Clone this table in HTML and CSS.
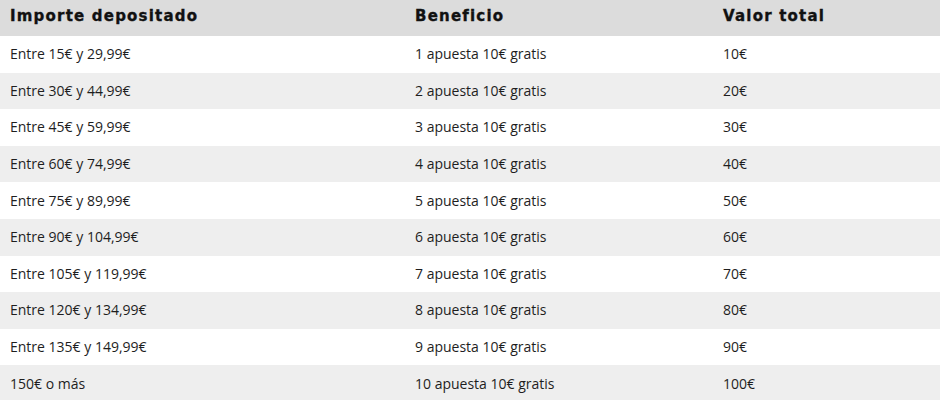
FILE: index.html
```html
<!DOCTYPE html>
<html lang="es">
<head>
<meta charset="utf-8">
<link rel="stylesheet" href="styles.css">
</head>
<body>
<table class="bonus">
  <thead>
    <tr><th class="c1">Importe depositado</th><th class="c2">Beneficio</th><th class="c3">Valor total</th></tr>
  </thead>
  <tbody>
    <tr><td>Entre 15€ y 29,99€</td><td>1 apuesta 10€ gratis</td><td>10€</td></tr>
    <tr><td>Entre 30€ y 44,99€</td><td>2 apuesta 10€ gratis</td><td>20€</td></tr>
    <tr><td>Entre 45€ y 59,99€</td><td>3 apuesta 10€ gratis</td><td>30€</td></tr>
    <tr><td>Entre 60€ y 74,99€</td><td>4 apuesta 10€ gratis</td><td>40€</td></tr>
    <tr><td>Entre 75€ y 89,99€</td><td>5 apuesta 10€ gratis</td><td>50€</td></tr>
    <tr><td>Entre 90€ y 104,99€</td><td>6 apuesta 10€ gratis</td><td>60€</td></tr>
    <tr><td>Entre 105€ y 119,99€</td><td>7 apuesta 10€ gratis</td><td>70€</td></tr>
    <tr><td>Entre 120€ y 134,99€</td><td>8 apuesta 10€ gratis</td><td>80€</td></tr>
    <tr><td>Entre 135€ y 149,99€</td><td>9 apuesta 10€ gratis</td><td>90€</td></tr>
    <tr><td>150€ o más</td><td>10 apuesta 10€ gratis</td><td>100€</td></tr>
  </tbody>
</table>
</body>
</html>
```
FILE: styles.css
```css
html, body {
  margin: 0;
  padding: 0;
  background: #ffffff;
}
.bonus {
  width: 940px;
  border-collapse: collapse;
  table-layout: fixed;
  font-family: "Open Sans", "Liberation Sans", sans-serif;
  font-size: 14px;
  color: #1e1e1e;
}
.bonus th {
  background: #dcdcdc;
  height: 36px;
  padding: 0 0 4px 10px;
  box-sizing: border-box;
  line-height: 18px;
  text-align: left;
  font-family: "DejaVu Sans", sans-serif;
  font-weight: 700;
  font-size: 15px;
  color: #111111;
  letter-spacing: 1.2px;
  -webkit-text-stroke: 0.35px #111111;
}
.bonus .c1 { width: 405px; }
.bonus .c2 { width: 308px; }
.bonus td {
  height: 36.6px;
  padding: 0 0 0 10px;
  box-sizing: border-box;
  line-height: 18px;
}
.bonus tbody tr:nth-child(even) td {
  background: #eeeeee;
}
```
